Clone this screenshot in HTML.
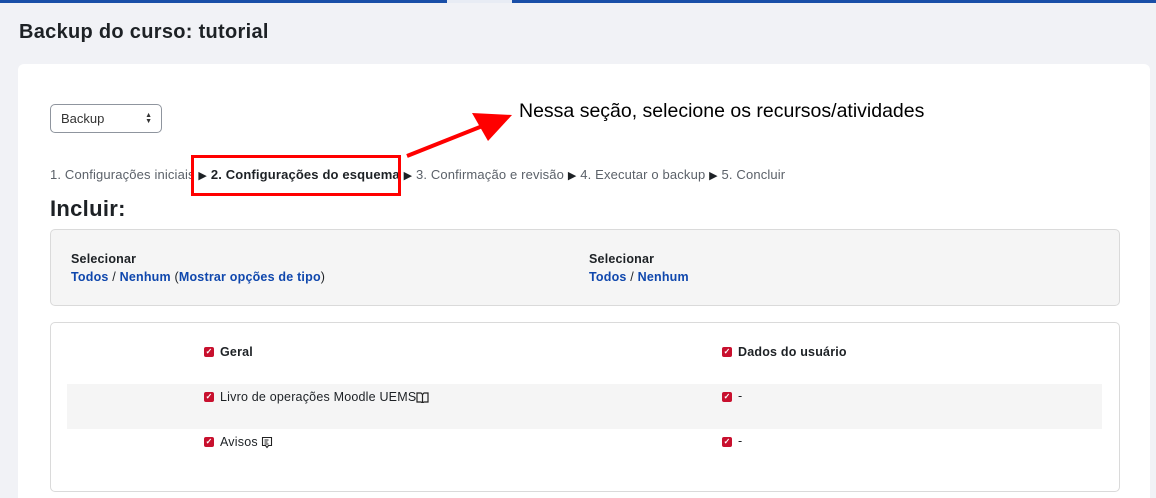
<!DOCTYPE html>
<html><head><meta charset="utf-8"><style>
html,body{margin:0;width:1156px;height:498px;overflow:hidden}
body{background:#f1f2f6;font-family:"Liberation Sans",sans-serif;color:#1d2125;position:relative}
.top{position:absolute;left:0;top:0;width:1156px;height:3px;background:#1a4fa8}
.tab{position:absolute;left:447px;top:0;width:65px;height:3px;background:#e8ecf4}
h1{position:absolute;left:19px;top:21px;margin:0;font-size:20px;font-weight:bold;letter-spacing:0.3px}
.card{position:absolute;left:18px;top:64px;width:1132px;height:450px;background:#fff;border-radius:6px}
.abs{position:absolute}
.sel{left:50px;top:104px;width:110px;height:27px;border:1px solid #8f959e;border-radius:5px;font-size:13px;color:#333}
.sel span{position:absolute;left:10px;top:6px}
.sel i{position:absolute;right:9px;top:8px;font-size:7px;font-style:normal;line-height:6px}
.steps{left:50px;top:167px;font-size:13px;color:#5b6169;white-space:nowrap;letter-spacing:0.15px}
.steps b{color:#1d2125}
.steps s{text-decoration:none;color:#1d2125;font-size:11px}
.redbox{left:191px;top:155px;width:210px;height:41px;border:3px solid #f00;box-sizing:border-box}
.note{left:519px;top:100px;font-size:19.5px;color:#000}
h2{position:absolute;left:50px;top:196px;margin:0;font-size:22px;font-weight:bold;letter-spacing:0.3px}
.box1{left:50px;top:229px;width:1068px;height:75px;background:#f5f5f5;border:1px solid #dadada;border-radius:5px}
.box2{left:50px;top:322px;width:1068px;height:168px;background:#fff;border:1px solid #dadada;border-radius:5px}
.t{font-size:12.5px;letter-spacing:0.2px}
.b{font-weight:bold}
a{color:#0f47ad;font-weight:bold;text-decoration:none}
.cb{position:absolute;width:10px;height:10px;background:#c8102e;border-radius:2px;color:#fff;font-size:8px;line-height:10px;text-align:center;font-weight:bold}
.row{left:67px;top:384px;width:1035px;height:45px;background:#f5f5f5}
</style></head><body>
<div class="top"></div><div class="tab"></div>
<h1>Backup do curso: tutorial</h1>
<div class="card"></div>
<div class="abs sel"><span>Backup</span><i>▲<br>▼</i></div>
<div class="abs note">Nessa seção, selecione os recursos/atividades</div>
<svg class="abs" style="left:400px;top:105px" width="120" height="60"><line x1="7" y1="51" x2="85" y2="20" stroke="#f00" stroke-width="4"/><polygon points="112,10 72,8 88,36" fill="#f00"/></svg>
<div class="abs steps">1. Configurações iniciais <s>▶</s> <b>2. Configurações do esquema</b> <s>▶</s> 3. Confirmação e revisão <s>▶</s> 4. Executar o backup <s>▶</s> 5. Concluir</div>
<div class="abs redbox"></div>
<h2>Incluir:</h2>
<div class="abs box1"></div>
<div class="abs t b" style="left:71px;top:252px">Selecionar</div>
<div class="abs t" style="left:71px;top:270px"><a>Todos</a> / <a>Nenhum</a> (<a>Mostrar opções de tipo</a>)</div>
<div class="abs t b" style="left:589px;top:252px">Selecionar</div>
<div class="abs t" style="left:589px;top:270px"><a>Todos</a> / <a>Nenhum</a></div>
<div class="abs box2"></div>
<div class="abs row"></div>
<div class="cb" style="left:204px;top:347px">✓</div><div class="abs t b" style="left:220px;top:345px">Geral</div>
<div class="cb" style="left:722px;top:347px">✓</div><div class="abs t b" style="left:738px;top:345px">Dados do usuário</div>
<div class="cb" style="left:204px;top:392px">✓</div><div class="abs t" style="left:220px;top:390px">Livro de operações Moodle UEMS<svg width="13" height="12" style="vertical-align:-2px"><path d="M1 2h4l1.5 1.5L8 2h4v9H8l-1.5 1L5 11H1z M6.5 3.5v8" fill="none" stroke="#222" stroke-width="1.2"/></svg></div>
<div class="cb" style="left:722px;top:392px">✓</div><div class="abs t" style="left:738px;top:389px">-</div>
<div class="cb" style="left:204px;top:437px">✓</div><div class="abs t" style="left:220px;top:435px">Avisos <svg width="12" height="13" style="vertical-align:-3px"><path d="M1.5 1.5h9v8h-3l-1.5 2-1.5-2h-3z M3.5 4h4M3.5 6h3M3.5 8h4" fill="none" stroke="#222" stroke-width="1.1"/></svg></div>
<div class="cb" style="left:722px;top:437px">✓</div><div class="abs t" style="left:738px;top:434px">-</div>
</body></html>
